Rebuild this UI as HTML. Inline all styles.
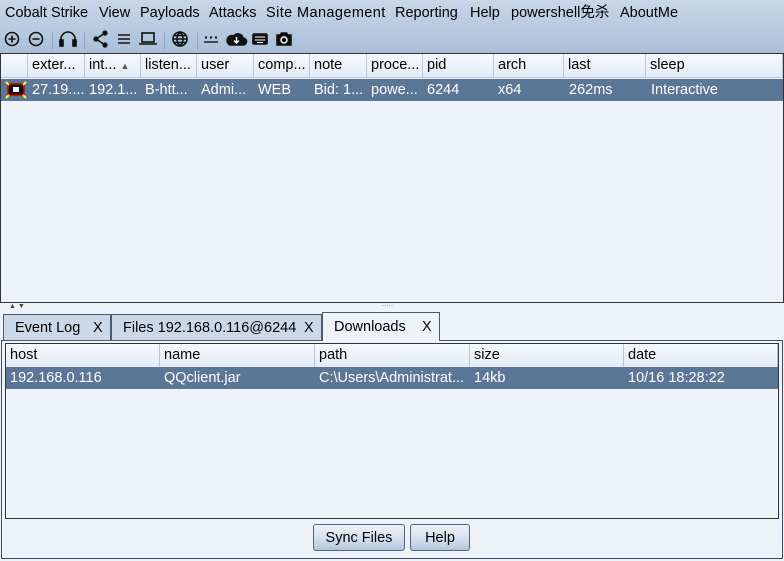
<!DOCTYPE html>
<html><head><meta charset="utf-8"><style>
*{box-sizing:border-box;margin:0;padding:0}
body{width:784px;height:561px;overflow:hidden;background:#eef3fa;font-family:"Liberation Sans","Noto Sans CJK SC",sans-serif;font-size:14px;color:#000;position:relative;line-height:17px}
.a{position:absolute}
#top{left:0;top:0;width:784px;height:53px;background:linear-gradient(#c9d6e7,#a9bfd9)}
.menu span{position:absolute;top:5px;font-size:14.5px;line-height:17px}
.sep{position:absolute;top:32px;width:1px;height:17px;background:#8ea5c2}
.tbl{border:1px solid #333;background:#eef3fa}
.hd{position:absolute;height:24px;background:linear-gradient(#f6f9fd,#e3ebf5);border-right:1px solid #b5c6dc;border-bottom:1px solid #b5c6dc;padding:3px 0 0 4px;white-space:nowrap;overflow:hidden;font-size:14.5px}
.row{position:absolute;height:22px;background:#5b7696}
.c{position:absolute;color:#fff;white-space:nowrap;font-size:14.5px}
.tab{position:absolute;top:314px;height:27px;border:1px solid #4a5a70;background:#cbd8e8;padding:5px 0 0 11px;white-space:nowrap;font-size:14.5px}
.btn{position:absolute;top:524px;height:27px;border:1px solid #4f6582;border-radius:3px;background:linear-gradient(#eef2f8,#d7e1ee 50%,#b4c6dc);text-align:center;padding-top:5px;font-size:14.5px}
</style></head><body>
<div id="top" class="a"></div>
<div class="menu">
<span style="left:5px">Cobalt Strike</span><span style="left:99px">View</span><span style="left:140px">Payloads</span><span style="left:209px">Attacks</span><span style="left:266px;letter-spacing:0.4px">Site Management</span><span style="left:395px">Reporting</span><span style="left:470px">Help</span><span style="left:511px">powershell免杀</span><span style="left:620px">AboutMe</span>
</div>
<svg class="a" style="left:0;top:28px" width="300" height="24" viewBox="0 0 300 24" fill="none" stroke="#111" stroke-width="1.6">
<circle cx="12" cy="11" r="6.5"/><path d="M8.5 11h7M12 7.5v7"/>
<circle cx="36" cy="11" r="6.5"/><path d="M32.5 11h7"/>
<path d="M61 17v-6a7 7 0 0 1 14 0v6"/><rect x="60" y="12" width="3" height="6" fill="#111"/><rect x="73" y="12" width="3" height="6" fill="#111"/>
<circle cx="96" cy="11" r="1.8" fill="#111"/><circle cx="105" cy="5" r="1.8" fill="#111"/><circle cx="105" cy="17" r="1.8" fill="#111"/><path d="M96 11l9-6M96 11l9 6"/>
<path d="M118 7h12M118 11h12M118 15h12"/>
<rect x="142" y="5" width="12" height="9"/><path d="M139 16h18"/>
<circle cx="180" cy="11" r="7"/><path d="M173 11h14M180 4c-4 4-4 10 0 14M180 4c4 4 4 10 0 14M174 7.5h12M174 14.5h12"/>
<path d="M204 14h14" stroke-width="1.4"/><path d="M205 9.5h2M210 9.5h2M215 9.5h2" stroke-width="2"/>
<path d="M230 17h13a3.5 3.5 0 0 0 0-7a5 5 0 0 0-9-2a4 4 0 0 0-4 9z" fill="#111"/><path d="M236.5 9v6M234 12.5l2.5 2.5 2.5-2.5" stroke="#fff" stroke-width="1.4"/>
<rect x="253" y="6" width="14" height="10" rx="1" fill="#111"/><path d="M255 9h10M255 12h10M257 14.5h6" stroke="#fff" stroke-width="1"/>
<path d="M277 7h3l1.5-2h5l1.5 2h3v10h-14z" fill="#111"/><circle cx="284" cy="12" r="3" stroke="#fff" stroke-width="1.4"/>
</svg>
<div class="sep" style="left:52px"></div><div class="sep" style="left:84px"></div><div class="sep" style="left:164px"></div><div class="sep" style="left:197px"></div>

<div class="a tbl" style="left:0;top:53px;width:784px;height:250px"></div>
<div class="hd" style="left:1px;top:54px;width:27px"></div>
<div class="hd" style="left:28px;top:54px;width:57px">exter...</div>
<div class="hd" style="left:85px;top:54px;width:56px">int... <span style="font-size:9px;color:#555">▲</span></div>
<div class="hd" style="left:141px;top:54px;width:56px">listen...</div>
<div class="hd" style="left:197px;top:54px;width:57px">user</div>
<div class="hd" style="left:254px;top:54px;width:56px">comp...</div>
<div class="hd" style="left:310px;top:54px;width:57px">note</div>
<div class="hd" style="left:367px;top:54px;width:56px">proce...</div>
<div class="hd" style="left:423px;top:54px;width:71px">pid</div>
<div class="hd" style="left:494px;top:54px;width:70px">arch</div>
<div class="hd" style="left:564px;top:54px;width:82px">last</div>
<div class="hd" style="left:646px;top:54px;width:137px">sleep</div>
<div class="row" style="left:1px;top:79px;width:782px"></div>
<svg class="a" style="left:5px;top:81px" width="22" height="18"><rect x="3" y="3" width="16" height="11" fill="#111" stroke="#c00" stroke-width="1.5"/><rect x="8" y="6" width="6" height="5" fill="#fff"/><path d="M1 1l3 3M21 1l-3 3M1 17l3-3M21 17l-3-3" stroke="#ff0" stroke-width="2"/></svg>
<div class="c" style="left:32px;top:82px">27.19....</div><div class="c" style="left:89px;top:82px">192.1...</div><div class="c" style="left:145px;top:82px">B-htt...</div><div class="c" style="left:201px;top:82px">Admi...</div><div class="c" style="left:258px;top:82px">WEB</div><div class="c" style="left:314px;top:82px">Bid: 1...</div><div class="c" style="left:371px;top:82px">powe...</div><div class="c" style="left:427px;top:82px">6244</div><div class="c" style="left:498px;top:82px">x64</div><div class="c" style="left:569px;top:82px">262ms</div><div class="c" style="left:651px;top:82px">Interactive</div>

<div class="a" style="left:9px;top:303px;font-size:7px;line-height:8px;color:#444">▲ ▼</div>
<div class="a" style="left:382px;top:300px;font-size:8px;line-height:8px;color:#889">.....</div>

<div class="a" style="left:1px;top:340px;width:782px;height:219px;border:1px solid #3c4e66;background:#eef3fa"></div>
<div class="tab" style="left:3px;width:108px">Event Log <span style="position:absolute;left:89px">X</span></div>
<div class="tab" style="left:111px;width:211px">Files 192.168.0.116@6244 <span style="position:absolute;left:192px">X</span></div>
<div class="tab" style="left:322px;top:312px;width:118px;height:29px;background:#eef3fa;border-bottom:none;padding-top:6px">Downloads <span style="position:absolute;left:99px">X</span></div>

<div class="a tbl" style="left:5px;top:343px;width:774px;height:176px"></div>
<div class="hd" style="left:6px;top:344px;width:154px">host</div>
<div class="hd" style="left:160px;top:344px;width:155px">name</div>
<div class="hd" style="left:315px;top:344px;width:155px">path</div>
<div class="hd" style="left:470px;top:344px;width:154px">size</div>
<div class="hd" style="left:624px;top:344px;width:154px">date</div>
<div class="row" style="left:6px;top:367px;width:772px"></div>
<div class="c" style="left:10px;top:370px">192.168.0.116</div><div class="c" style="left:164px;top:370px">QQclient.jar</div><div class="c" style="left:319px;top:370px">C:\Users\Administrat...</div><div class="c" style="left:474px;top:370px">14kb</div><div class="c" style="left:628px;top:370px">10/16 18:28:22</div>

<div class="btn" style="left:313px;width:92px">Sync Files</div>
<div class="btn" style="left:410px;width:60px">Help</div>
</body></html>
